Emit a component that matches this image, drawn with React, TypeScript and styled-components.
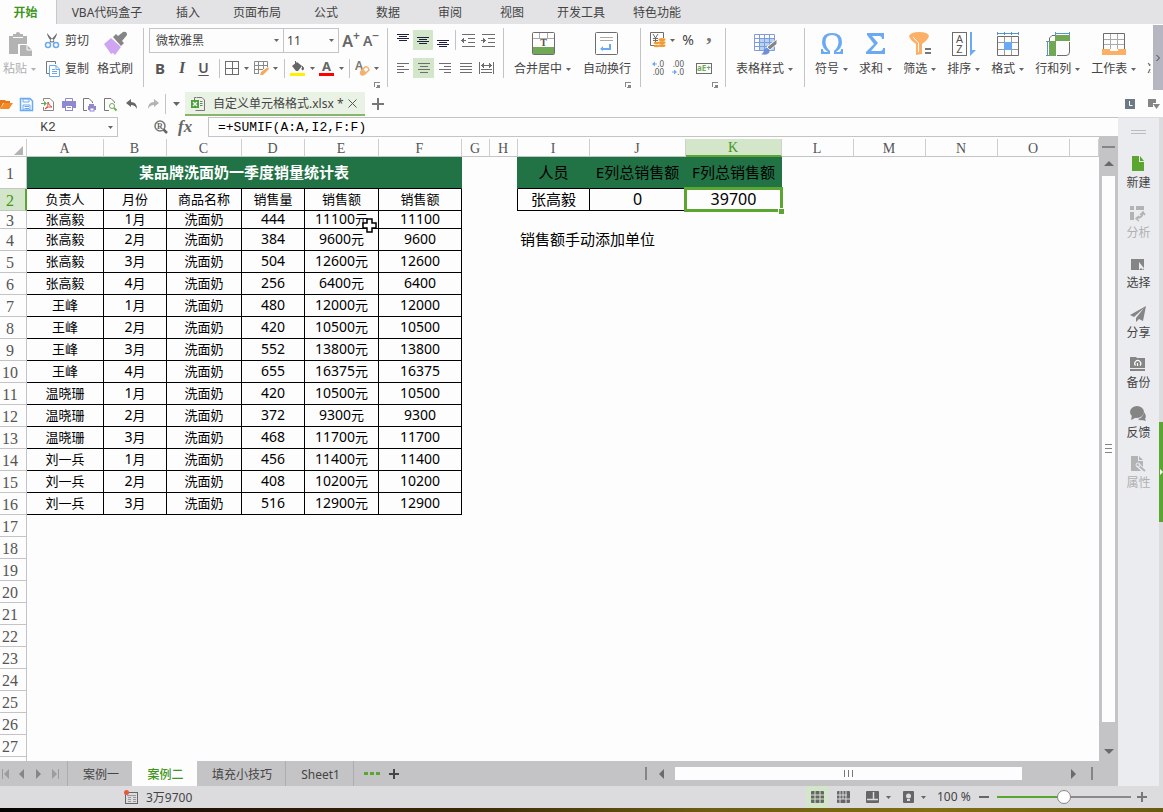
import React from 'react';
import styled, { createGlobalStyle, css } from 'styled-components';

const ui = '"Noto Sans", "Noto Sans CJK SC", sans-serif';
const serif = '"Liberation Serif", "Noto Sans CJK SC", serif';
const mono = '"Liberation Mono", "Noto Sans CJK SC", monospace';
const green = '#5aa631';
const lime = '#d3e6c9';
const sheetGreen = '#217346';
const grey = '#c4c4c6';
const ink = '#444';
const icon = '#6d6d6d';
const blue = '#6aaaf2';
const orange = '#fbb066';

const Global = createGlobalStyle`
  * { box-sizing: border-box; }
  html, body, #root { height: 100%; margin: 0; }
  body { background: #fdfdfd; font: 12px/16px ${ui}; color: ${ink}; overflow: hidden; }
  button, input, select { font: inherit; color: inherit; margin: 0; padding: 0; border: 0; background: none; border-radius: 0; outline: 0; }
  button { white-space: nowrap; cursor: default; }
  svg { display: block; flex: none; overflow: visible; }
`;

/* ---------- icons ---------- */

const Svg = ({ w = 24, h = w, children, ...rest }: any) => (
  <svg width={w} height={h} viewBox={`0 0 ${w} ${h}`} fill="none" aria-hidden="true" {...rest}>{children}</svg>
);
const Caret = ({ color = '#666' }: { color?: string }) => (
  <Svg w={5} h={3}><path d="M0 0H5L2.5 3Z" fill={color} /></Svg>
);
const Arrow = ({ d, color = '#6a6a6a' }: { d: 'up' | 'down' | 'left' | 'right'; color?: string }) => {
  const paths = { up: 'M0 7L5 2L10 7Z', down: 'M0 3H10L5 8Z', left: 'M7 0V10L2 5Z', right: 'M3 0V10L8 5Z' };
  return <Svg w={10}><path d={paths[d]} fill={color} /></Svg>;
};
const Lines = ({ rows, color = icon, w = 14, h = 12 }: { rows: number[][]; color?: string; w?: number; h?: number }) => (
  <Svg w={w} h={h} shapeRendering="crispEdges">
    {rows.map(([x, y, len, thick = 1], i) => <rect key={i} x={x} y={y} width={len} height={thick} fill={color} />)}
  </Svg>
);
const PasteIcon = () => (
  <Svg>
    <path d="M1 4H5V2H8V1Q10 -1 12 1V2H15V4H19V12H10V22H1Z" fill="#b3b3b3" />
    <path d="M5 5.500H15" stroke="#fdfdfd" />
    <path d="M12 13H19L24 18V24H12Z" fill="#b3b3b3" /><path d="M19 13V18H24" stroke="#fdfdfd" />
  </Svg>
);
const CutIcon = () => (
  <Svg w={16}>
    <path d="M3 0Q3 4 9 10L10.500 8Q6 4 3 0ZM13 0Q13 4 7 10L5.500 8Q10 4 13 0Z" fill={icon} />
    <circle cx="4" cy="12" r="2.500" stroke={blue} strokeWidth="1.500" /><circle cx="12" cy="12" r="2.500" stroke={blue} strokeWidth="1.500" />
  </Svg>
);
const CopyIcon = () => (
  <Svg w={16}>
    <path d="M5.500 12.500H2.500V.5H11.500V3" stroke="#777" />
    <path d="M5.500 4.500H12L15.500 8V15.500H5.500Z" fill="#fff" stroke={blue} />
    <path d="M12 4.500V8.500H15M8 8.500H11M8 10.500H13M8 12.500H13" stroke={blue} />
  </Svg>
);
const BrushIcon = () => (
  <Svg>
    <path d="M10 5L13 2L15 4L20 0Q24 -1 24 3L19 9L21 11L18 14Z" fill="#858585" />
    <path d="M8 6L18 15L12 23L10 21L8 22L1 12Z" fill="#cfa5f2" />
  </Svg>
);
const GridIcon = () => (
  <Svg w={14} shapeRendering="crispEdges"><path d="M.5 .5H13.500V13.500H.5ZM7 .5V13.500M.5 7H13.500" stroke={icon} /></Svg>
);
const GridPenIcon = () => (
  <Svg w={14}>
    <path d="M.5 13V.5H13.500V6M.5 4.500H13.500M.5 8.500H9M.5 12.500H5M4.500 .5V12.500M9.500 .5V8" stroke="#8a8a8a" />
    <path d="M14 6L15 8L9 14H6L7 11Z" fill="#f5a95b" />
  </Svg>
);
const BucketIcon = () => (
  <Svg w={15} h={15}>
    <path d="M2 5L7 1L12 5L8 10H6Z" fill="#666" /><path d="M5.500 3V0M12 5Q14.500 7 13 9Q11.500 9 12 7" stroke="#666" fill="#666" />
    <rect y="12" width="15" height="3" fill="#fff000" />
  </Svg>
);
const FontColorIcon = () => (
  <Svg w={15} h={15}><text x="7.500" y="10" fontSize="13" fontWeight="700" textAnchor="middle" fill="#666">A</text><rect y="12" width="15" height="3" fill="#f00" /></Svg>
);
const EraserIcon = () => (
  <Svg w={14}>
    <text x="0" y="9" fontSize="12" fontWeight="600" fill="#777">A</text>
    <path d="M5.500 11L10 6Q13 5 14 9L9 13.500Q5.500 15 5.500 11Z" fill="#fff" stroke="#f5b070" strokeWidth="1.500" /><path d="M8 8L12 12L9 14Q5 15 5 11Z" fill="#f5b070" />
  </Svg>
);
const MergeIcon = () => (
  <Svg>
    <rect x="1.500" y=".5" width="22" height="22" rx="1" fill="#fff" stroke={icon} />
    <path d="M8.500 1V6M16.500 1V6M2 6.500H23" stroke="#aaa" /><rect x="2" y="15" width="21" height="7" fill="#71a856" />
    <text x="12.500" y="14" fontFamily={serif} fontSize="10" fontWeight="700" textAnchor="middle" fill="#555">T</text>
  </Svg>
);
const WrapIcon = () => (
  <Svg>
    <rect x=".5" y=".5" width="22" height="22" rx="1" fill="#fff" stroke={icon} />
    <path d="M5 5.500H18M5 8.500H18" stroke="#aaa" /><path d="M14 12H16V18H8V19L5 17L8 14V16H14Z" fill={blue} />
  </Svg>
);
const CurrencyIcon = () => (
  <Svg w={17} h={16}>
    <path d="M8 13.500H1.500V.5H14.500V6" stroke={icon} /><path d="M4 2L6.500 6L9 2M4 6.500H9M4 8.500H9M6.500 6V12" stroke={icon} />
    <g fill="#f19b35"><ellipse cx="13" cy="7.500" rx="3.500" ry="1.500" /><ellipse cx="13" cy="10.500" rx="3.500" ry="1.500" /><ellipse cx="13" cy="13.500" rx="3.500" ry="1.500" /><ellipse cx="7.500" cy="11" rx="3" ry="1.300" /><ellipse cx="7.500" cy="14" rx="3" ry="1.300" /></g>
  </Svg>
);
const DecimalIcon = ({ more }: { more?: boolean }) => (
  <Svg w={14} h={16}>
    <text x="13" y="7" fontSize="8" textAnchor="end" fill="#555">{more ? '.0' : '.00'}</text>
    <text x="13" y="15" fontSize="8" textAnchor="end" fill="#555">{more ? '.00' : '.0'}</text>
    {more ? <path d="M1 4L4 1.500V3.500H6V4.500H4V6.500Z" fill={blue} /> : <path d="M6 12L3 9.500V11.500H1V12.500H3V14.500Z" fill={blue} />}
  </Svg>
);
const AeIcon = () => (
  <Svg w={16} h={12}><rect x=".5" y="1.500" width="15" height="10" stroke={icon} /><text x="8" y="9" fontSize="8" fontWeight="700" textAnchor="middle" fill="#71a856">aE+</text></Svg>
);
const TableStyleIcon = () => (
  <Svg>
    <rect x="6" y="6" width="15" height="12" fill="#b5d3f2" />
    <path d="M1.500 2.500H21.500V18.500H1.500ZM1.500 6.500H21.500M1.500 10.500H21.500M1.500 14.500H21.500M6.500 2.500V18.500M11.500 2.500V18.500M16.500 2.500V18.500" stroke="#7f9bdc" />
    <path d="M14 15L24 7V12L17 18Z" fill="#858585" stroke="#fff" /><path d="M14 16Q18 17 16 21Q13 24 8 22Q11 21 11 18Q12 16 14 16Z" fill="#6f8fd8" />
  </Svg>
);
const OmegaIcon = () => <Svg><path d="M1 22V17H3Q3 20 5 20H8Q2 16 2 10Q2 1 12 1Q22 1 22 10Q22 16 16 20H19Q21 20 21 17H23V22H14V19Q18 16 18.500 10Q18.500 3 12 3Q5.500 3 5.500 10Q6 16 10 19V22Z" fill={blue} /></Svg>;
const SigmaIcon = () => <Svg><path d="M3 1H20V7H18Q18 4 15 4H8L14 11L7 19H16Q19 19 19 16H21V22H2V20L10 12L3 3Z" fill={blue} /></Svg>;
const FilterIcon = () => (
  <Svg>
    <path d="M1 4Q3 0 11 0Q20 0 21 4Q20 8 14 12V22L8 23V12Q2 8 1 4Z" fill={orange} /><path d="M5 5L10.500 11V20" stroke="#fff" />
    <path d="M17 17H23M17 21H23" stroke="#777" strokeWidth="2" />
  </Svg>
);
const SortIcon = () => (
  <Svg>
    <rect x=".500" y=".5" width="14" height="23" stroke={icon} fill="#fff" />
    <text x="7.500" y="11" fontSize="11" textAnchor="middle" fill="#555">A</text><text x="7.500" y="21" fontSize="11" textAnchor="middle" fill="#555">Z</text>
    <path d="M18 0H20V18H24L18 24Z" fill={blue} />
  </Svg>
);
const FormatIcon = () => (
  <Svg>
    <path d="M1 1.500H23M1.500 0V3M8.500 0V3M15.500 0V3M22.500 0V3" stroke="#5b93cf" />
    <path d="M1.500 10.500H22.500M1.500 17.500H22.500M8.500 4.500V23.500M15.500 4.500V23.500" stroke="#9a9a9a" /><path d="M1.500 4.500H22.500V23.500H1.500Z" stroke={icon} />
    <rect x="8" y="10" width="8" height="8" fill={blue} />
  </Svg>
);
const RowColIcon = () => (
  <Svg>
    <path d="M9 1.500H24M9.500 0V3M23.500 0V3M1.500 9V24M0 9.500H3M0 23.500H3" stroke="#5b93cf" />
    <path d="M3.500 9V6L6 3.500H9M11 23.500H20Q23.500 23.500 23.500 20V10" stroke={icon} />
    <path d="M9 3H24V9H9ZM3 9H10V24H3Z" fill="#71a856" />
  </Svg>
);
const SheetIcon = () => (
  <Svg>
    <path d="M1.500 17V1.500H22.500V17" stroke={icon} /><path d="M2 7.500H22M2 12.500H22M8.500 2V17M15.500 2V17" stroke="#aaa" />
    <path d="M0 17H8V19H16V17H24V23H0Z" fill={orange} />
  </Svg>
);
const LaunchIcon = () => <Svg w={6} shapeRendering="crispEdges"><path d="M.5 5V.5H5.500M2 5.500H5.500V3" stroke="#888" /><rect x="3" y="3" width="2" height="2" fill="#888" /></Svg>;

const FolderIcon = () => <Svg w={13} h={14}><path d="M0 3H5L6 4H10V6H3L0 12Z" fill="#e77817" /><path d="M4 6H13L9 12H0Z" fill="#f58a27" /></Svg>;
const SaveIcon = () => <Svg w={13}><path d="M.5 .5H10L12.500 3V12.500H.5Z" stroke={blue} strokeWidth="1.500" /><path d="M3 1H9V4H3ZM3 7H10V12H3Z" stroke={blue} /><path d="M4.500 8.500H9M4.500 10.500H9" stroke={blue} /></Svg>;
const PdfIcon = () => <Svg w={13}><path d="M2.500 3V.5H9L12.500 4V12.500H2.500V9" stroke="#888" /><path d="M0 5H3V3L6 5.500L3 8V6H0Z" fill="#5fae58" /><path d="M4 11Q8 8 7 4Q8 8 11 9Q7 8 4 11Z" stroke="#e04b3a" /></Svg>;
const PrintIcon = () => <Svg w={14} h={13}><path d="M3.500 4V.5H10.500V4" stroke="#9189cf" /><rect y="3" width="14" height="7" fill="#9189cf" /><rect x="3.500" y="7.500" width="7" height="5" fill="#fff" stroke="#9189cf" /><path d="M5 9.500H9" stroke="#9189cf" /></Svg>;
const PreviewIcon = () => <Svg w={13}><path d="M4 12.500H.5V.5H6L9.500 4V5" stroke="#777" /><path d="M6 6H11V8H13V12H5V8H6Z" fill="#9189cf" /><rect x="7" y="10" width="4" height="3" fill="#fff" stroke="#9189cf" /></Svg>;
const FindIcon = () => <Svg w={13}><path d="M5 12.500H.5V.5H7L10.500 4V5" stroke="#777" /><circle cx="8" cy="8" r="2.500" stroke="#6cae4e" /><path d="M10 10L12.500 12.500" stroke="#6cae4e" strokeWidth="2" /></Svg>;
const UndoIcon = () => <Svg w={12}><path d="M0 5L5 1V4Q11 4 11 11Q9 7 5 7V9Z" fill="#666" /></Svg>;
const RedoIcon = () => <Svg w={12}><path d="M12 5L7 1V4Q1 4 1 11Q3 7 7 7V9Z" fill="#b3b3b3" /></Svg>;
const XlsIcon = () => <Svg w={14}><path d="M5.500 .5H11L13.500 3V13.500H4.500" stroke="#777" /><path d="M3.500 3V.5H5M9 4.500H11.500M9 6.500H11.500M9 8.500H11.500" stroke="#777" /><rect y="3" width="8" height="8" fill="#4ba03c" /><path d="M2 5L6 9M6 5L2 9" stroke="#fff" strokeWidth="1.200" /></Svg>;
const LensIcon = () => <Svg w={14}><circle cx="6" cy="6" r="5" stroke="#777" strokeWidth="1.500" /><path d="M9.500 9.500L13 13" stroke="#666" strokeWidth="2.500" /><text x="6" y="9" fontSize="8" fontWeight="700" fontFamily={serif} textAnchor="middle" fill="#666">R</text></Svg>;

const NewIcon = () => <Svg w={16}><path d="M2 0H9V6H14V15H2Z" fill={green} /><path d="M10 0L14 5H10Z" fill={green} /></Svg>;
const AnalyzeIcon = () => <Svg w={16}><path d="M0 0H4V4H0ZM6 0H14V4H6ZM0 6H4V14H0Z" fill="#b3b3b3" /><path d="M7 12Q12 12 13 7M10 9L13 6L15 9M9 10L6 12.500L9 15" stroke="#b3b3b3" strokeWidth="1.500" /></Svg>;
const SelectIcon = () => <Svg w={16}><rect x="1" y="3" width="13" height="11" fill="#858585" /><path d="M9 6V14L11 12L13 14L14 12L13 11Z" fill="#ebecf0" /></Svg>;
const ShareIcon = () => <Svg w={16}><path d="M16 0L0 9L4 11L14 2L6 12V16L9 13L13 15Z" fill="#858585" /></Svg>;
const BackupIcon = () => <Svg w={16}><path d="M0 1H6L7 2H15V12H0ZM0 13H15V15H0Z" fill="#858585" /><path d="M5.500 9.500A3 3 0 1 1 10 9.500M7.500 7V10" stroke="#fff" strokeWidth="1.200" /></Svg>;
const FeedbackIcon = () => <Svg w={16}><path d="M14 6Q17 10 15 13L16 15L12 14Q10 15 8 13Q13 12 14 6Z" fill="#858585" /><ellipse cx="7" cy="6" rx="7" ry="6" fill="#858585" /><path d="M2 9L1 14L7 11Z" fill="#858585" /></Svg>;
const PropIcon = () => <Svg w={16}><path d="M1 0H8V5H13V15H1Z" fill="#b3b3b3" /><path d="M9 0L13 4H9Z" fill="#b3b3b3" /><path d="M8 9L14 15" stroke="#ebecf0" strokeWidth="4" /><path d="M8 9L15 15" stroke="#b3b3b3" strokeWidth="2" /><circle cx="8" cy="9" r="2" stroke="#ebecf0" /></Svg>;

/* ---------- menu bar ---------- */

const Page = styled.div`display: flex; flex-direction: column; height: 100vh;`;
const MenuBar = styled.nav`display: flex; height: 24px; flex: none; background: #e3e3e5; overflow: hidden;`;
const MenuTab = styled.button<{ $w: number; $active?: boolean }>`
  width: ${p => p.$w}px; flex: none; padding-top: 2px; text-align: center; color: ${ink};
  ${p => p.$active && css`background: #fdfdfd; color: #3f961c; font-weight: 700; padding-right: 5px; border-right: 1px solid #c8c8cc;`}
`;

/* ---------- ribbon ---------- */

const Ribbon = styled.section`display: flex; height: 67px; flex: none;`;
const Group = styled.div<{ $left: number; $right?: number; $grow?: boolean }>`
  display: flex; flex-direction: column; flex: ${p => (p.$grow ? '1 1 0' : 'none')}; min-width: 0;
  overflow: ${p => (p.$grow ? 'hidden' : 'visible')}; margin-right: ${p => (p.$grow ? 2 : 0)}px;
  padding: 4px ${p => p.$right ?? 7}px 0 ${p => p.$left}px;
`;
const Tools = styled.div<{ $gap?: number }>`display: flex; height: 50px; gap: ${p => p.$gap ?? 0}px;`;
const Rule = styled.i<{ $h: number; $m?: string }>`
  flex: none; width: 1px; height: ${p => p.$h}px; background: ${grey}; margin: ${p => p.$m ?? '4px 0 0'};
`;
const Big = styled.button<{ $off?: boolean }>`
  display: flex; flex-direction: column; align-items: center; gap: 5px; padding-top: 4px; flex: none; color: ${p => (p.$off ? '#b0b0b0' : ink)};
`;
const Label = styled.span`display: flex; align-items: center; gap: 4px;`;
const Stack = styled.div<{ $gap?: number; $top?: number }>`
  display: flex; flex-direction: column; gap: ${p => p.$gap ?? 8}px; padding-top: ${p => p.$top ?? 2}px;
`;
const Row = styled.div`display: flex; align-items: center; height: 20px;`;
const FontRow = styled.div`display: flex; align-items: center; gap: 2px;`;
const Small = styled.button`display: flex; align-items: center; gap: 5px; height: 20px; padding-top: 1px;`;
const Tool = styled.button<{ $w?: number; $on?: boolean }>`
  display: flex; align-items: center; justify-content: center; height: 20px; width: ${p => p.$w ?? 20}px; flex: none;
  background: ${p => (p.$on ? lime : 'none')};
`;
const Split = styled.button`
  display: flex; align-items: center; gap: 5px; height: 20px; width: 25px; flex: none;
  & + & { margin-left: 4px; }
`;
const Bold = styled.span`font-size: 15px; line-height: 16px; font-weight: 700; color: #555;`;
const Italic = styled.span`font: italic 700 16px/16px ${serif}; color: #555;`;
const Under = styled.span`font-size: 14px; line-height: 16px; font-weight: 600; color: #555; text-decoration: underline; text-underline-offset: 2px;`;
const Grow = styled.span`font-size: 16px; line-height: 20px; font-weight: 600; color: #666; display: flex;
  sup { font-size: 12px; line-height: 10px; vertical-align: top; }`;
const Shrink = styled(Grow)`font-size: 14px;`;
const Percent = styled.span`font-size: 14px; line-height: 16px;`;
const Comma = styled.span`font: 700 22px/8px ${serif}; height: 20px; color: #777;`;
const Combos = styled.div`display: flex; height: 25px; border: 1px solid ${grey};`;
const Combo = styled.label<{ $w: number }>`
  position: relative; display: flex; align-items: center; width: ${p => p.$w}px;
  & + & { border-left: 1px solid ${grey}; }
  select { appearance: none; width: 100%; height: 100%; padding-left: ${p => (p.$w > 100 ? 6 : 3)}px; }
  svg { position: absolute; right: 4px; }
`;
const Launch = styled.button`align-self: flex-end; margin-top: 4px; height: 6px;`;
const Scroller = styled.button`
  display: flex; align-items: center; justify-content: center; width: 10px; margin: 1px 0; flex: none; background: #b5b6c1; color: #555;
`;

const BigTool = ({ i, label, caret, off }: { i: React.ReactNode; label: string; caret?: boolean; off?: boolean }) => (
  <Big $off={off}>{i}<Label>{label}{caret && <Caret color={off ? '#b0b0b0' : '#666'} />}</Label></Big>
);
const Launcher = () => <Launch aria-label="更多设置"><LaunchIcon /></Launch>;

const menus: [string, number][] = [['VBA代码盒子', 100], ['插入', 62], ['页面布局', 76], ['公式', 62], ['数据', 62], ['审阅', 62], ['视图', 62], ['开发工具', 76], ['特色功能', 76]];

const RibbonBar = () => (
  <Ribbon>
    <Group $left={3} $right={10}>
      <Tools $gap={8}>
        <BigTool i={<PasteIcon />} label="粘贴" caret off />
        <Stack>
          <Small><CutIcon />剪切</Small>
          <Small><CopyIcon />复制</Small>
        </Stack>
        <BigTool i={<BrushIcon />} label="格式刷" />
      </Tools>
    </Group>
    <Rule $h={59} />
    <Group $left={5}>
      <Stack $top={0} $gap={5}>
        <FontRow>
          <Combos>
            <Combo $w={133}><select aria-label="字体"><option>微软雅黑</option></select><Caret /></Combo>
            <Combo $w={55}><select aria-label="字号"><option>11</option></select><Caret /></Combo>
          </Combos>
          <Tool aria-label="增大字号"><Grow>A<sup>+</sup></Grow></Tool>
          <Tool $w={16} aria-label="减小字号"><Shrink>A<sup>−</sup></Shrink></Tool>
        </FontRow>
        <Row>
          <Tool $w={22}><Bold>B</Bold></Tool>
          <Tool $w={22}><Italic>I</Italic></Tool>
          <Tool $w={21}><Under>U</Under></Tool>
          <Rule $h={19} $m="0 5px" />
          <Split aria-label="边框"><GridIcon /><Caret /></Split>
          <Split aria-label="绘图边框"><GridPenIcon /><Caret /></Split>
          <Rule $h={19} $m="0 5px" />
          <Split aria-label="填充颜色"><BucketIcon /><Caret /></Split>
          <Split aria-label="字体颜色"><FontColorIcon /><Caret /></Split>
          <Rule $h={19} $m="0 5px" />
          <Split aria-label="清除"><EraserIcon /><Caret /></Split>
        </Row>
      </Stack>
      <Launcher />
    </Group>
    <Rule $h={59} />
    <Group $left={4}>
      <Tools>
        <Stack>
          <Row>
            <Tool $w={21} aria-label="顶端对齐"><Lines color="#1c1f3d" rows={[[1, 0, 12], [3, 2, 8], [1, 4, 12], [3, 6, 8]]} /></Tool>
            <Tool $on aria-label="垂直居中"><Lines color="#1c1f3d" rows={[[1, 3, 12], [3, 5, 8], [1, 7, 12], [3, 9, 8]]} /></Tool>
            <Tool aria-label="底端对齐"><Lines color="#1c1f3d" rows={[[1, 6, 12], [3, 8, 8], [1, 10, 12], [3, 12, 8]]} /></Tool>
            <Rule $h={20} $m="0 2px" />
            <Tool aria-label="减少缩进"><Lines rows={[[1, 0, 13], [7, 4, 7], [7, 8, 7], [1, 12, 13], [0, 6, 5], [1, 5, 1, 3], [2, 4, 1, 5]]} h={13} /></Tool>
            <Tool aria-label="增加缩进"><Lines rows={[[1, 0, 13], [7, 4, 7], [7, 8, 7], [1, 12, 13], [0, 6, 5], [3, 5, 1, 3], [2, 4, 1, 5]]} h={13} /></Tool>
          </Row>
          <Row>
            <Tool $w={21} aria-label="左对齐"><Lines rows={[[1, 1, 12], [1, 4, 7], [1, 7, 12], [1, 10, 7]]} /></Tool>
            <Tool $w={21} $on aria-label="居中"><Lines rows={[[1, 1, 12], [3, 4, 8], [1, 7, 12], [3, 10, 8]]} /></Tool>
            <Tool $w={21} aria-label="右对齐"><Lines rows={[[1, 1, 12], [6, 4, 7], [1, 7, 12], [6, 10, 7]]} /></Tool>
            <Tool $w={21} aria-label="两端对齐"><Lines rows={[[1, 1, 12], [1, 4, 12], [1, 7, 12], [1, 10, 12]]} /></Tool>
            <Tool $w={21} aria-label="分散对齐"><Lines w={15} rows={[[0, 0, 1, 12], [14, 0, 1, 12], [2, 3, 11], [3, 2, 1, 3], [4, 1, 1, 5], [11, 2, 1, 3], [10, 1, 1, 5], [2, 7, 11], [2, 10, 11]]} /></Tool>
          </Row>
        </Stack>
        <Rule $h={50} $m="0 10px 0 5px" />
        <Tools $gap={12}>
          <BigTool i={<MergeIcon />} label="合并居中" caret />
          <BigTool i={<WrapIcon />} label="自动换行" />
        </Tools>
      </Tools>
      <Launcher />
    </Group>
    <Rule $h={59} $m="4px 0 0 2px" />
    <Group $left={8}>
      <Tools>
        <Stack>
          <Row>
            <Label><CurrencyIcon /><Caret /></Label>
            <Tool $w={26}><Percent>%</Percent></Tool>
            <Tool $w={16}><Comma>,</Comma></Tool>
          </Row>
          <Row>
            <Tool $w={18} aria-label="增加小数位数"><DecimalIcon more /></Tool>
            <Tool $w={22} aria-label="减少小数位数"><DecimalIcon /></Tool>
            <Tool $w={29} aria-label="数字格式"><AeIcon /></Tool>
          </Row>
        </Stack>
      </Tools>
      <Launcher />
    </Group>
    <Rule $h={59} />
    <Group $left={10} $right={11}><Tools><BigTool i={<TableStyleIcon />} label="表格样式" caret /></Tools></Group>
    <Rule $h={59} />
    <Group $left={10} $right={0} $grow>
      <Tools $gap={11}>
        <BigTool i={<OmegaIcon />} label="符号" caret />
        <BigTool i={<SigmaIcon />} label="求和" caret />
        <BigTool i={<FilterIcon />} label="筛选" caret />
        <BigTool i={<SortIcon />} label="排序" caret />
        <BigTool i={<FormatIcon />} label="格式" caret />
        <BigTool i={<RowColIcon />} label="行和列" caret />
        <BigTool i={<SheetIcon />} label="工作表" caret />
        <BigTool i={<Svg />} label="冻结窗格" caret />
      </Tools>
    </Group>
    <Scroller aria-label="向右滚动"><Svg w={4} h={6}><path d="M.5 0L3.500 3L.5 6" stroke="#444" /></Svg></Scroller>
  </Ribbon>
);

/* ---------- quick access and file tabs ---------- */

const QuickBar = styled.section`display: flex; align-items: center; height: 26px; flex: none;`;
const Quick = styled.button<{ $w?: number; $start?: boolean }>`
  display: flex; align-items: center; justify-content: ${p => (p.$start ? 'flex-start' : 'center')}; width: ${p => p.$w ?? 21}px; height: 24px; flex: none;
`;
const FileTab = styled.div`
  display: flex; align-items: center; width: 180px; height: 24px; padding: 1px 8px 0 6px; background: #eaf2e5; border-bottom: 2px solid #86b56b;
  span { flex: 1; margin-left: 8px; white-space: nowrap; }
`;
const Cross = () => <Svg w={9}><path d="M.5 .5L8.500 8.500M8.500 .5L.5 8.500" stroke="#555" /></Svg>;
const Plus = ({ s = 12, color = '#777' }: { s?: number; color?: string }) => (
  <Svg w={s} shapeRendering="crispEdges"><rect x={s / 2 - 1} width="2" height={s} fill={color} /><rect y={s / 2 - 1} width={s} height="2" fill={color} /></Svg>
);
const Spacer = styled.div`flex: 1;`;

/* ---------- formula bar ---------- */

const Work = styled.div`display: flex; flex: 1; min-height: 0;`;
const Main = styled.main`display: flex; flex-direction: column; flex: 1; min-width: 0;`;
const FormulaBar = styled.div`display: flex; height: 20px; flex: none;`;
const NameBox = styled.label`
  display: flex; align-items: center; width: 118px; padding-right: 4px; border: solid ${grey}; border-width: 1px 1px 1px 0;
  input { width: 100%; min-width: 0; padding: 2px 12px 0 0; text-align: center; font: 13px/16px ${mono}; }
`;
const FormulaTools = styled.div`display: flex; align-items: center; width: 90px; padding-left: 36px; gap: 10px; overflow: hidden;`;
const Fx = styled.button`font: italic 700 17px/18px ${serif}; color: #666;`;
const Formula = styled.input`
  && { flex: 1; min-width: 0; padding: 2px 0 0 9px; border: solid ${grey}; border-width: 1px 0 1px 1px; font: 13px/16px ${mono}; color: #000; }
`;

/* ---------- grid ---------- */

const GridArea = styled.div`display: flex; flex: 1; min-height: 0;`;
const GridClip = styled.div`flex: 1; min-width: 0; overflow: hidden; padding-top: 2px;`;
const Table = styled.table`
  width: 100%; table-layout: fixed; border-collapse: separate; border-spacing: 0;
  th, td { padding: 0; white-space: nowrap; }
`;
const ColHead = styled.th<{ $on?: boolean }>`
  height: 18px; font: 14px/14px ${serif}; color: ${p => (p.$on ? '#3f961c' : '#555')}; background: ${p => (p.$on ? lime : 'none')};
  border-right: 1px solid #cfcfcf; border-bottom: ${p => (p.$on ? `2px solid ${green}` : `1px solid ${grey}`)};
  && { padding: ${p => (p.$on ? 2 : 3)}px 1px 0 0; }
`;
const Corner = styled(ColHead)`&& { padding-top: 5px; } svg { margin-left: 14px; }`;
const RowHead = styled.th<{ $on?: boolean }>`
  font: 16px/16px ${serif}; color: ${p => (p.$on ? '#3f961c' : '#555')}; background: ${p => (p.$on ? lime : 'none')};
  border-bottom: 1px solid ${grey}; border-right: ${p => (p.$on ? `2px solid ${green}` : `1px solid ${grey}`)};
  && { padding: 1px ${p => (p.$on ? 5 : 6)}px 0 0; }
  span { display: block; height: 16px; line-height: 18px; }
`;
const TR = styled.tr<{ $h: number }>`height: ${p => p.$h}px;`;
const Cell = styled.td<{ $right?: string; $bottom?: string; $fill?: string; $big?: boolean; $note?: boolean }>`
  position: relative; color: #000; font-size: ${p => (p.$big ? 15 : 13)}px; line-height: 14px; text-align: ${p => (p.$note ? 'left' : 'center')};
  background: ${p => p.$fill ?? 'none'};
  ${p => p.$right && css`border-right: 1px solid ${p.$right};`}
  ${p => p.$bottom && css`border-bottom: 1px solid ${p.$bottom};`}
  && { padding: 0 0 2px ${p => (p.$note ? 2 : 0)}px; }
`;
const Title = styled(Cell)`color: #fff; font-weight: 700;`;
const Num = styled.span<{ $big?: boolean }>`font-size: ${p => (p.$big ? 16 : 14)}px;`;
const Selection = styled.div`
  position: absolute; inset: -2px; z-index: 1; border: 3px solid ${green};
  &::after { content: ''; position: absolute; right: -4px; bottom: -5px; width: 5px; height: 5px; background: ${green}; outline: 1px solid #fff; }
`;
const Pointer = styled.svg`position: absolute; right: 1px; top: 7px; z-index: 2;`;

const Value = ({ text, big }: { text: string; big?: boolean }) => (
  <>{text.split(/(\d+)/).map((s, i) => (i % 2 ? <Num key={i} $big={big}>{s}</Num> : s))}</>
);

const columns: [string, number?][] = [['A', 77], ['B', 63], ['C', 75], ['D', 63], ['E', 74], ['F', 83], ['G', 28], ['H', 28], ['I', 72], ['J', 96], ['K', 96], ['L', 72], ['M', 72], ['N', 72], ['O', 72], ['']];
const people: [string, number[][]][] = [
  ['张高毅', [[444, 11100], [384, 9600], [504, 12600], [256, 6400]]],
  ['王峰', [[480, 12000], [420, 10500], [552, 13800], [655, 16375]]],
  ['温晓珊', [[420, 10500], [372, 9300], [468, 11700]]],
  ['刘一兵', [[456, 11400], [408, 10200], [516, 12900]]],
];
const records = people.flatMap(([name, list]) => list.map(([qty, sum], i) => [name, `${i + 1}月`, '洗面奶', `${qty}`, `${sum}元`, `${sum}`]));
const blankRows = Array.from({ length: 12 }, (_, i) => i + 17);

const Sheet = () => (
  <Table>
    <colgroup><col style={{ width: 27 }} />{columns.map(([c, w]) => <col key={c} style={{ width: w }} />)}</colgroup>
    <thead>
      <tr>
        <Corner aria-label="全选"><Svg w={9}><path d="M9 0V9H0Z" fill="#b3b3b3" /></Svg></Corner>
        {columns.map(([c]) => <ColHead key={c} $on={c === 'K'}>{c}</ColHead>)}
      </tr>
    </thead>
    <tbody>
      <TR $h={32}>
        <RowHead><span>1</span></RowHead>
        <Title as="td" colSpan={6} $big $fill={sheetGreen} $right={sheetGreen} $bottom="#000">某品牌洗面奶一季度销量统计表</Title>
        <Cell /><Cell $right={sheetGreen} />
        {['人员', 'E列总销售额', 'F列总销售额'].map(t => <Cell key={t} $big $fill={sheetGreen} $right={sheetGreen} $bottom="#000">{t}</Cell>)}
      </TR>
      <TR $h={22}>
        <RowHead $on><span>2</span></RowHead>
        {['负责人', '月份', '商品名称', '销售量', '销售额', '销售额'].map((t, i) => <Cell key={i} $right="#000" $bottom="#000">{t}</Cell>)}
        <Cell /><Cell $right="#000" />
        <Cell $big $right="#000" $bottom="#000">张高毅</Cell>
        <Cell $big $right="#000" $bottom="#000"><Value text="0" big /></Cell>
        <Cell $big $right="#000" $bottom="#000"><Value text="39700" big /><Selection /></Cell>
      </TR>
      {records.map((r, n) => (
        <TR key={n} $h={n === 0 ? 18 : 22}>
          <RowHead><span>{n + 3}</span></RowHead>
          {r.map((t, i) => (
            <Cell key={i} $right="#000" $bottom="#000">
              <Value text={t} />
              {n === 0 && i === 4 && (
                <Pointer width="15" height="15" viewBox="0 0 15 15" aria-hidden="true"><path d="M5 1H10V5H14V10H10V14H5V10H1V5H5Z" fill="#fff" stroke="#000" strokeWidth="1.500" /></Pointer>
              )}
            </Cell>
          ))}
          {n === 1 && <><Cell /><Cell /><Cell $big $note>销售额手动添加单位</Cell></>}
        </TR>
      ))}
      {blankRows.map(n => <TR key={n} $h={22}><RowHead><span>{n}</span></RowHead></TR>)}
    </tbody>
  </Table>
);

const VScroll = styled.div`
  display: flex; flex-direction: column; align-items: center; width: 19px; flex: none; background: ${grey}; padding: 9px 0 5px;
`;
const SplitBar = styled.i`width: 13px; height: 2px; background: #858585; margin-bottom: 11px;`;
const VThumb = styled.div`display: flex; align-items: center; justify-content: center; width: 13px; flex: 1; margin: 7px 0 24px; background: #fdfdfd;`;

/* ---------- sheet tabs ---------- */

const SheetBar = styled.div`display: flex; align-items: center; height: 25px; flex: none; background: ${grey};`;
const Nav = styled.div`display: flex; align-items: center; width: 68px; height: 100%; padding-left: 1px; border-right: 1px solid #adadb0;
  button { width: 16px; height: 10px; }
  button:last-child { margin-left: 1px; }`;
const SheetTab = styled.button<{ $w: number; $on?: boolean; $line?: boolean }>`
  width: ${p => p.$w}px; height: 100%; flex: none; padding: 3px 0 0 2px; background: ${p => (p.$on ? '#fdfdfd' : 'none')}; color: ${p => (p.$on ? '#3f961c' : ink)};
  font-weight: ${p => (p.$on ? 500 : 400)};
  border-right: ${p => (p.$line ? '1px solid #adadb0' : 0)};
`;
const Dots = styled.button`display: flex; gap: 2px; width: 35px; justify-content: center;
  i { width: 4px; height: 3px; background: ${green}; }`;
const HScroll = styled.div`display: flex; align-items: center; width: 473px;`;
const HThumb = styled.div`display: flex; align-items: center; justify-content: center; flex: 1; height: 13px; margin: 0 46px 0 8px; background: #fdfdfd;`;
const Mark = styled.i`width: 2px; height: 13px; background: #858585;`;
const HLeft = styled.span`margin-left: 10px;`;
const HEnd = styled.span`display: flex; width: 40px; padding-left: 13px;`;

/* ---------- side panel ---------- */

const Side = styled.aside`display: flex; flex: none; width: 45px;`;
const SideTools = styled.div`flex: 1; display: flex; flex-direction: column; align-items: center; gap: 10px; background: #ebecf0; border-top: 1px solid #dcdce0;`;
const Grip = styled.i`width: 15px; height: 4px; margin: 12px 0 10px; border: solid #bcbcc0; border-width: 1px 0;`;
const SideTool = styled.button<{ $off?: boolean }>`
  display: flex; flex-direction: column; align-items: center; gap: 3px; height: 40px; padding-top: 2px; color: ${p => (p.$off ? '#b0b0b0' : ink)};
`;
const Edge = styled.div`width: 4px; background: #dcdcdf; padding-top: 305px;`;
const Pull = styled.button`display: flex; align-items: center; justify-content: flex-end; width: 4px; height: 100px; background: ${green}; overflow: hidden;`;

/* ---------- status bar ---------- */

const Status = styled.footer`display: flex; align-items: center; height: 22px; flex: none; padding: 0 16px 0 124px; background: #dcdcdf;`;
const StatusText = styled.span`margin-left: 8px; padding-top: 1px;`;
const View = styled.button<{ $w: number; $on?: boolean; $m?: number }>`
  display: flex; align-items: center; justify-content: center; gap: 7px; width: ${p => p.$w}px; height: 22px; margin-right: ${p => p.$m ?? 0}px; background: ${p => (p.$on ? lime : 'none')};
`;
const Zoom = styled.span`width: 42px; white-space: nowrap;`;
const Slider = styled.input`
  && { appearance: none; width: 134px; height: 14px; margin: 0 6px 0 8px; background: linear-gradient(to right, ${green} 50%, #8a8a8a 50%) center / 100% 2px no-repeat; }
  &::-webkit-slider-thumb { appearance: none; width: 14px; height: 14px; border-radius: 7px; background: #fff; border: 1px solid #858585; }
`;
const Desk = styled.div`height: 4px; flex: none; background: linear-gradient(to right, #050301, #2a1606 22%, #3b2808 40%, #6b5a10 60%, #806f14 80%, #6a5a10);`;

const App = () => (
  <Page>
    <Global />
    <MenuBar>
      <MenuTab $w={57} $active>开始</MenuTab>
      {menus.map(([t, w]) => <MenuTab key={t} $w={w}>{t}</MenuTab>)}
    </MenuBar>
    <RibbonBar />
    <QuickBar>
      <Quick $w={16} $start aria-label="打开"><FolderIcon /></Quick>
      <Quick aria-label="保存"><SaveIcon /></Quick>
      <Quick aria-label="输出为PDF"><PdfIcon /></Quick>
      <Quick aria-label="打印"><PrintIcon /></Quick>
      <Quick aria-label="打印预览"><PreviewIcon /></Quick>
      <Quick aria-label="查找"><FindIcon /></Quick>
      <Quick aria-label="撤销"><UndoIcon /></Quick>
      <Quick aria-label="恢复"><RedoIcon /></Quick>
      <Rule $h={20} $m="0 2px" />
      <Quick $w={17} aria-label="自定义"><Svg w={7} h={4}><path d="M0 0H7L3.500 4Z" fill="#666" /></Svg></Quick>
      <FileTab><XlsIcon /><span>自定义单元格格式.xlsx *</span><button aria-label="关闭"><Cross /></button></FileTab>
      <Quick $w={26} aria-label="新建标签"><Plus /></Quick>
      <Spacer />
      <Quick $w={30} aria-label="历史"><Svg w={10}><rect width="10" height="10" fill="#6c7a86" /><path d="M4.500 2V6.500H7.500" stroke="#fff" /></Svg></Quick>
      <Quick $w={18} aria-label="窗口"><Svg w={12} h={10}><path d="M0 0H8V4H5V8H0Z" fill="#858585" /><path d="M5 5H12L8.500 10Z" fill="#858585" /></Svg></Quick>
    </QuickBar>
    <Work>
      <Main>
        <FormulaBar>
          <NameBox><input aria-label="名称框" defaultValue="K2" /><Caret /></NameBox>
          <FormulaTools><button aria-label="查找函数"><LensIcon /></button><Fx>fx</Fx></FormulaTools>
          <Formula aria-label="编辑栏" defaultValue="=+SUMIF(A:A,I2,F:F)" />
        </FormulaBar>
        <GridArea>
          <GridClip><Sheet /></GridClip>
          <VScroll>
            <SplitBar /><Arrow d="up" />
            <VThumb><Lines w={7} h={10} color="#858585" rows={[[0, 0, 7], [0, 4, 7], [0, 8, 7]]} /></VThumb>
            <Arrow d="down" />
          </VScroll>
        </GridArea>
        <SheetBar>
          <Nav>
            <button aria-label="首个"><Svg w={10}><path d="M1.500 0V10" stroke="#9c9c9f" /><path d="M8 0V10L3 5Z" fill="#9c9c9f" /></Svg></button>
            <button aria-label="上一个"><Arrow d="left" color="#858588" /></button>
            <button aria-label="下一个"><Arrow d="right" color="#858588" /></button>
            <button aria-label="末个"><Svg w={10}><path d="M8.500 0V10" stroke="#9c9c9f" /><path d="M2 0V10L7 5Z" fill="#9c9c9f" /></Svg></button>
          </Nav>
          <SheetTab $w={64}>案例一</SheetTab>
          <SheetTab $w={65} $on>案例二</SheetTab>
          <SheetTab $w={89} $line>填充小技巧</SheetTab>
          <SheetTab $w={68} $line>Sheet1</SheetTab>
          <Dots aria-label="更多工作表"><i /><i /><i /></Dots>
          <button aria-label="新建工作表"><Plus s={10} color="#444" /></button>
          <Spacer />
          <HScroll>
            <Mark />
            <HLeft><Arrow d="left" /></HLeft>
            <HThumb><Svg w={9} h={7} shapeRendering="crispEdges"><path d="M.5 0V7M4.500 0V7M8.500 0V7" stroke="#777" /></Svg></HThumb>
            <Arrow d="right" />
            <HEnd><Mark /></HEnd>
          </HScroll>
        </SheetBar>
      </Main>
      <Side>
        <SideTools>
          <Grip />
          <SideTool><NewIcon />新建</SideTool>
          <SideTool $off><AnalyzeIcon />分析</SideTool>
          <SideTool><SelectIcon />选择</SideTool>
          <SideTool><ShareIcon />分享</SideTool>
          <SideTool><BackupIcon />备份</SideTool>
          <SideTool><FeedbackIcon />反馈</SideTool>
          <SideTool $off><PropIcon />属性</SideTool>
        </SideTools>
        <Edge><Pull aria-label="展开"><Svg w={3} h={6}><path d="M0 0L3 3L0 6Z" fill="#fff" /></Svg></Pull></Edge>
      </Side>
    </Work>
    <Status>
      <Svg w={14}><rect x="1.500" y="2.500" width="12" height="11" stroke="#666" /><path d="M3 5.500H12M4 7.500H7M9 7.500H12M4 9.500H7M9 9.500H12M4 11.500H7M9 11.500H12" stroke="#999" /><circle cx="2.500" cy="2.500" r="2.500" fill="#e8593c" /></Svg>
      <StatusText>3万9700</StatusText>
      <Spacer />
      <View $w={22} $on $m={4} aria-label="普通视图"><Svg w={13} h={12}><rect width="13" height="12" rx="1" fill="#666" /><path d="M0 4H13M0 8H13M4 0V12M9 0V12" stroke={lime} /></Svg></View>
      <View $w={22} $m={9} aria-label="分页预览"><Svg w={13} h={12}><rect width="13" height="12" rx="1" fill="#666" /><path d="M0 4H10M0 8H13M3 0V12M6 0V8M9 0V12" stroke="#dcdcdf" /></Svg></View>
      <View $w={30} $m={6} aria-label="阅读布局"><Svg w={13} h={12}><rect width="13" height="12" rx="1" fill="#666" /><path d="M7.500 1V8M1 8.500H12" stroke="#dcdcdf" strokeWidth="1.500" /></Svg><Caret /></View>
      <View $w={30} $m={8} aria-label="护眼模式"><Svg w={11} h={12}><rect width="11" height="12" rx="1" fill="#666" /><circle cx="5.500" cy="5" r="2.500" fill="#dcdcdf" /><rect x="4" y="8" width="3" height="2" fill="#dcdcdf" /></Svg><Caret /></View>
      <Zoom>100 %</Zoom>
      <button aria-label="缩小"><Svg w={10} h={2}><rect width="10" height="2" fill="#666" /></Svg></button>
      <Slider type="range" aria-label="显示比例" defaultValue={50} />
      <button aria-label="放大"><Plus s={10} /></button>
    </Status>
    <Desk />
  </Page>
);

export default App;
